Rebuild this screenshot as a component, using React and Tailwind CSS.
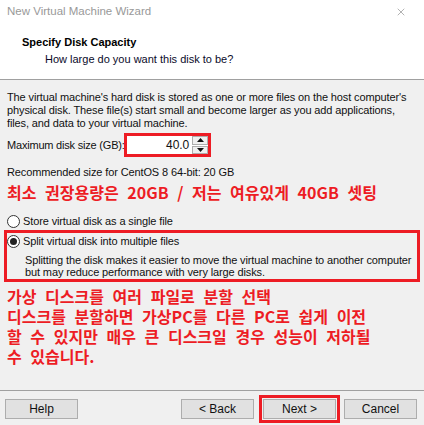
import { X } from 'lucide-react'

const UI_FONT = { fontFamily: '"Liberation Sans", Arial, sans-serif' }
const KR_FONT = { fontFamily: '"Noto Sans CJK KR", sans-serif' }

function Radio({ checked }) {
  return (
    <span className="w-[13px] h-[13px] rounded-full border border-[#333] bg-white flex items-center justify-center shrink-0">
      {checked && <span className="w-[7px] h-[7px] rounded-full bg-[#222]" />}
    </span>
  )
}

function Spinner() {
  return (
    <div className="flex flex-col w-[16px] h-[18px] gap-px">
      {['up', 'down'].map((dir) => (
        <div key={dir} className="flex-1 border border-[#adadad] bg-[#f0f0f0] flex items-center justify-center">
          <svg width="7" height="4" viewBox="0 0 7 4">
            {dir === 'up' ? <path d="M0 4 L3.5 0 L7 4 Z" fill="#111" /> : <path d="M0 0 L3.5 4 L7 0 Z" fill="#111" />}
          </svg>
        </div>
      ))}
    </div>
  )
}

function WinButton({ children, highlight }) {
  const btn = (
    <button className="w-[73px] h-[20px] bg-[#e1e1e1] border border-[#adadad] text-[12px] text-[#111] leading-none flex items-center justify-center">
      {children}
    </button>
  )
  if (!highlight) return btn
  return <div className="border-[3px] border-[#ed1c24] p-px -my-[5px] -mx-[4px]">{btn}</div>
}

export default function App() {
  return (
    <div className="w-[424px] h-[425px] overflow-hidden bg-[#f0f0f0] text-[#111] flex flex-col text-[11px]" style={UI_FONT}>
      {/* Header */}
      <div className="bg-white h-[80px] border-b border-[#a0a0a0] shrink-0">
        <div className="flex items-center justify-between pl-[7px] pr-[17px] h-[24px]">
          <span className="text-[11.5px] text-[#999]">New Virtual Machine Wizard</span>
          <X size={12} strokeWidth={1.3} className="text-[#888]" />
        </div>
        <div className="pl-[22px] pt-[10px] font-bold leading-[16px] text-black">Specify Disk Capacity</div>
        <div className="pl-[45px] pt-[1px] leading-[16px] text-[#0a0a2a]">How large do you want this disk to be?</div>
      </div>

      {/* Body */}
      <div className="px-[7px] pt-[11px] leading-[13px] tracking-[-0.12px]">
        <p className="whitespace-nowrap">
          The virtual machine's hard disk is stored as one or more files on the host computer's
          <br />
          physical disk. These file(s) start small and become larger as you add applications,
          <br />
          files, and data to your virtual machine.
        </p>

        <div className="mt-[3px] h-[24px] flex items-center">
          <span className="w-[117px] whitespace-nowrap tracking-[-0.2px]">Maximum disk size (GB):</span>
          <div className="w-[87px] h-[24px] border-[3px] border-[#ed1c24] bg-white flex items-center">
            <span className="flex-1 text-right pr-[3px] text-[12px]">40.0</span>
            <Spinner />
          </div>
        </div>

        <div className="mt-[8px] leading-[14px] whitespace-nowrap">Recommended size for CentOS 8 64-bit: 20 GB</div>

        <div
          className="mt-[3px] leading-[20px] text-[16px] font-bold text-[#ed1c24] whitespace-nowrap tracking-normal [word-spacing:5px]"
          style={KR_FONT}
        >
          최소 권장용량은 20GB / 저는 여유있게 40GB 셋팅
        </div>

        <div className="mt-[11px] h-[16px] flex items-center gap-[3px]">
          <Radio />
          <span>Store virtual disk as a single file</span>
        </div>
      </div>

      <div className="mx-[4px] mt-[1px] border-[3px] border-[#ed1c24] h-[52px] tracking-[-0.12px]">
        <div className="h-[16px] flex items-center gap-[3px]">
          <Radio checked />
          <span>Split virtual disk into multiple files</span>
        </div>
        <div className="pl-[18px] pt-[5px] leading-[12px] whitespace-nowrap">
          Splitting the disk makes it easier to move the virtual machine to another computer
          <br />
          but may reduce performance with very large disks.
        </div>
      </div>

      <div
        className="px-[7px] mt-[4px] leading-[20px] text-[16px] font-bold text-[#ed1c24] whitespace-nowrap [word-spacing:5px]"
        style={KR_FONT}
      >
        <div>가상 디스크를 여러 파일로 분할 선택</div>
        <div>디스크를 분할하면 가상PC를 다른 PC로 쉽게 이전</div>
        <div>할 수 있지만 매우 큰 디스크일 경우 성능이 저하될</div>
        <div>수 있습니다.</div>
      </div>

      {/* Footer */}
      <div className="mt-[24px] border-t border-[#a0a0a0] pt-[8px] pl-[5px] pr-[7px] flex items-center">
        <WinButton>Help</WinButton>
        <div className="flex-1" />
        <WinButton>&lt; Back</WinButton>
        <div className="w-[9px]" />
        <WinButton highlight>Next &gt;</WinButton>
        <div className="w-[8px]" />
        <WinButton>Cancel</WinButton>
      </div>
    </div>
  )
}
